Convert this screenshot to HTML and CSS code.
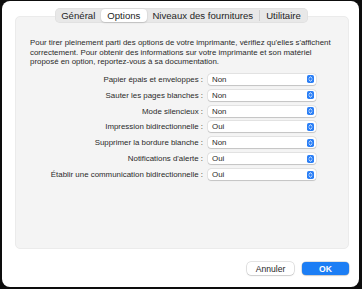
FILE: index.html
```html
<!DOCTYPE html>
<html lang="fr">
<head>
    <meta charset="UTF-8">
    <title>Options de l'imprimante</title>
    <link rel="stylesheet" href="styles.css">
</head>
<body>

<div class="window">
    <!-- Onglets -->
    <div class="tabs">
        <span class="tab">Général</span>
        <span class="tab active">Options</span>
        <span class="tab">Niveaux des fournitures</span>
        <span class="tab sep">Utilitaire</span>
    </div>

    <div class="panel">
        <p class="intro">Pour tirer pleinement parti des options de votre imprimante, vérifiez qu'elles s'affichent<br>correctement. Pour obtenir des informations sur votre imprimante et son matériel<br>proposé en option, reportez-vous à sa documentation.</p>

        <div class="rows" id="rows"></div>
    </div>

    <div class="actions">
        <button class="btn">Annuler</button>
        <button class="btn primary">OK</button>
    </div>
</div>

<script>
    const options = [
        { label: "Papier épais et enveloppes :", value: "Non" },
        { label: "Sauter les pages blanches :", value: "Non" },
        { label: "Mode silencieux :", value: "Non" },
        { label: "Impression bidirectionnelle :", value: "Oui" },
        { label: "Supprimer la bordure blanche :", value: "Non" },
        { label: "Notifications d'alerte :", value: "Oui" },
        { label: "Établir une communication bidirectionnelle :", value: "Oui" }
    ];

    const stepper = `
        <svg class="stepper" viewBox="0 0 8 9" width="8" height="9">
            <rect width="8" height="9" rx="2" fill="#2b7ff6"/>
            <path d="M2.3 3.6 L4 2 L5.7 3.6 M2.3 5.4 L4 7 L5.7 5.4" fill="none" stroke="#fff" stroke-width="1" stroke-linecap="round" stroke-linejoin="round"/>
        </svg>`;

    const rows = document.getElementById('rows');
    options.forEach(opt => {
        rows.innerHTML += `
            <div class="label">${opt.label}</div>
            <div class="select"><span>${opt.value}</span>${stepper}</div>
        `;
    });
</script>

</body>
</html>
```

FILE: styles.css
```css
* {
    margin: 0;
    padding: 0;
    box-sizing: border-box;
    font-family: 'Liberation Sans', Arial, sans-serif;
}
body {
    background-color: #0d0d0d;
    width: 362px;
    height: 289px;
    overflow: hidden;
}
.window {
    background: #ffffff;
    width: 357px;
    height: 286px;
    margin: 1px 3px 2px 2px;
    border-radius: 8px;
    padding: 7px 10px 0 13px;
    display: flex;
    flex-direction: column;
}
.tabs {
    align-self: center;
    display: flex;
    background: #e8e8e8;
    border-radius: 5px;
    height: 15px;
    padding: 1px;
    margin-bottom: -7px;
    margin-left: -1px;
    position: relative;
    z-index: 1;
    box-shadow: inset 0 0 0 0.5px rgba(0, 0, 0, 0.06);
}
.tab {
    font-size: 9.6px;
    color: #1e1e1e;
    padding: 0 5.5px;
    line-height: 13px;
    border-radius: 4px;
}
.tab.active {
    background: #ffffff;
    padding: 0 6.5px;
    box-shadow: 0 0.5px 1.5px rgba(0, 0, 0, 0.25);
}
.tab.sep {
    border-left: 1px solid #cfcfcf;
    border-radius: 0;
    line-height: 11px;
    margin: 1px 0;
    padding: 0 6.5px;
}
.panel {
    background: #f4f4f4;
    border: 1px solid #ebebeb;
    border-radius: 5px;
    height: 233px;
    padding: 21px 8px 0 14px;
}
.intro {
    font-size: 7.9px;
    line-height: 9.6px;
    color: #2a2a2a;
    white-space: nowrap;
}
.rows {
    display: grid;
    grid-template-columns: 173px 108px;
    column-gap: 5px;
    row-gap: 4.9px;
    margin-top: 7px;
}
.label {
    font-size: 7.9px;
    color: #2a2a2a;
    text-align: right;
    line-height: 11px;
}
.select {
    height: 11px;
    background: #ffffff;
    border-radius: 3px;
    box-shadow: 0 0 0 0.5px rgba(0, 0, 0, 0.12), 0 0.5px 1px rgba(0, 0, 0, 0.15);
    display: flex;
    align-items: center;
    justify-content: space-between;
    padding: 0 2px 0 4px;
    font-size: 7.9px;
    color: #2a2a2a;
}
.stepper {
    display: block;
    width: 7px;
    height: 8px;
}
.actions {
    display: flex;
    justify-content: flex-end;
    gap: 8px;
    margin-top: 13px;
}
.btn {
    width: 47px;
    height: 13px;
    border: none;
    border-radius: 4px;
    font-size: 8.6px;
    background: #ffffff;
    color: #262626;
    box-shadow: 0 0 0 0.5px rgba(0, 0, 0, 0.18), 0 0.5px 1.5px rgba(0, 0, 0, 0.2);
}
.btn.primary {
    background: #1c7ef5;
    color: #ffffff;
    font-weight: bold;
}
```
